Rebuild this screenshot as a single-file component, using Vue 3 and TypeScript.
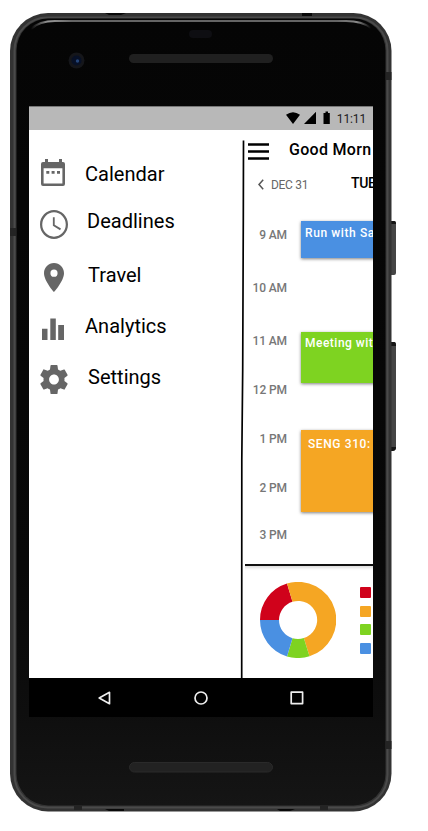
<script setup lang="ts">
interface MenuItem { id: string; label: string; paths: string[]; viewBox: string }
interface Slot { id: string; label: string }
interface CalendarEvent { id: string; title: string }

const menu: MenuItem[] = [
  { id: 'calendar', label: 'Calendar', viewBox: '0 0 24 27', paths: ['M4 0h3v3h11V0h3v3h1q2 0 2 2v20q0 2-2 2H2q-2 0-2-2V5q0-2 2-2h2zM2.6 9.2v15.2h18.8V9.2zM5.3 12h3v2.8h-3zm5.3 0h3v2.8h-3zm5.4 0h3v2.8h-3z'] },
  { id: 'deadlines', label: 'Deadlines', viewBox: '2 2 20 20', paths: ['M11.99 2C6.47 2 2 6.48 2 12s4.47 10 9.99 10C17.52 22 22 17.52 22 12S17.52 2 11.99 2zM12 20.4a8.4 8.4 0 1 1 0-16.8 8.4 8.4 0 0 1 0 16.8zM12.5 7H11.2v5.8l5.1 3.1.7-1.1-4.5-2.7z'] },
  { id: 'travel', label: 'Travel', viewBox: '5 2 14 20', paths: ['M12 2C8.13 2 5 5.13 5 9c0 5.25 7 13 7 13s7-7.75 7-13c0-3.87-3.13-7-7-7zm0 9.5a2.5 2.5 0 0 1 0-5 2.5 2.5 0 0 1 0 5z'] },
  { id: 'analytics', label: 'Analytics', viewBox: '0 0 22 22', paths: ['M0 10.8h5.5V22H0zM8.3.5h5.5V22H8.3zM16.2 7H22v15h-5.8z'] },
  { id: 'settings', label: 'Settings', viewBox: '2 2 20 20', paths: ['M19.43 12.98c.04-.32.07-.64.07-.98s-.03-.66-.07-.98l2.11-1.65c.19-.15.24-.42.12-.64l-2-3.46c-.12-.22-.39-.3-.61-.22l-2.49 1c-.52-.4-1.08-.73-1.69-.98l-.38-2.65C14.46 2.18 14.25 2 14 2h-4c-.25 0-.46.18-.49.42l-.38 2.65c-.61.25-1.17.59-1.69.98l-2.49-1c-.23-.09-.49 0-.61.22l-2 3.46c-.13.22-.07.49.12.64l2.11 1.65c-.04.32-.07.65-.07.98s.03.66.07.98l-2.11 1.65c-.19.15-.24.42-.12.64l2 3.46c.12.22.39.3.61.22l2.49-1c.52.4 1.08.73 1.69.98l.38 2.65c.03.24.24.42.49.42h4c.25 0 .46-.18.49-.42l.38-2.65c.61-.25 1.17-.59 1.69-.98l2.49 1c.23.09.49 0 .61-.22l2-3.46c.12-.22.07-.49-.12-.64l-2.11-1.65zM12 15.5c-1.93 0-3.5-1.57-3.5-3.5s1.57-3.5 3.5-3.5 3.5 1.57 3.5 3.5-1.57 3.5-3.5 3.5z'] },
]

const slots: Slot[] = [
  { id: 'h9', label: '9 AM' },
  { id: 'h10', label: '10 AM' },
  { id: 'h11', label: '11 AM' },
  { id: 'h12', label: '12 PM' },
  { id: 'h13', label: '1 PM' },
  { id: 'h14', label: '2 PM' },
  { id: 'h15', label: '3 PM' },
]

const events: CalendarEvent[] = [
  { id: 'run', title: 'Run with Sa' },
  { id: 'meeting', title: 'Meeting wit' },
  { id: 'class', title: 'SENG 310:' },
]

const legend: string[] = ['red', 'orange', 'green', 'blue']
</script>

<template>
  <div class="phone">
    <svg class="shell" width="388" height="800" viewBox="10 13 388 800" aria-hidden="true">
      <defs>
        <linearGradient id="face" x1="0" y1="0" x2="0" y2="1">
          <stop offset="0" stop-color="#050505" />
          <stop offset=".7" stop-color="#080808" />
          <stop offset=".88" stop-color="#0e0e0e" />
          <stop offset="1" stop-color="#151515" />
        </linearGradient>
        <linearGradient id="glint" x1="0" y1="0" x2="1" y2="0">
          <stop offset="0" stop-color="#999" stop-opacity="0" />
          <stop offset=".05" stop-color="#999" />
          <stop offset=".12" stop-color="#656565" />
          <stop offset=".9" stop-color="#656565" />
          <stop offset=".96" stop-color="#888" />
          <stop offset="1" stop-color="#888" stop-opacity="0" />
        </linearGradient>
      </defs>
      <path d="M390 221h4q2 0 2 2v50q0 2-2 2h-4zM390 342h4q2 0 2 2v104q0 2-2 2h-4z" fill="#454545" />
      <path d="M391 221h3q2 0 2 3h-5zM391 342h3q2 0 2 4h-5zM391 447h5q0 4-3 4h-2z" fill="#151515" />
      <rect x="10" y="13" width="381.5" height="798.5" rx="38" fill="#333" />
      <rect x="14.5" y="17.5" width="373" height="790" rx="33" fill="none" stroke="#4a4a4a" stroke-width="2" />
      <rect x="16.5" y="18.5" width="369" height="787" rx="32" fill="url(#face)" />
      <path d="M31 29Q39 21 55 21H346Q362 21 371 28" fill="none" stroke="url(#glint)" stroke-width="2" />
      <path d="M105 13h21l-5 2h-12zM302 13h10v3h-10zM105 809h19v2h-15zM277 809h18l-5 2h-10z" fill="#090909" />
      <path d="M10 228h6v8h-6zM386 72h5.500v8h-5.500zM386 741h5.500v8h-5.500zM74 806h8v4h-8zM320 806h8v4h-8z" fill="#242424" />
      <rect x="189" y="30" width="23" height="8" rx="4" fill="#0e0e12" />
      <circle cx="76.500" cy="60.500" r="8" fill="#15161a" />
      <circle cx="76.500" cy="60.500" r="5" fill="#071026" />
      <circle cx="77.500" cy="61" r="1.700" fill="#254579" />
      <rect x="129" y="54" width="144" height="9" rx="4.500" fill="#202020" />
      <rect x="129.500" y="762.500" width="143" height="9.500" rx="4.750" fill="#222" stroke="#2a2a2a" />
    </svg>

    <div class="screen">
      <header class="status">
        <svg width="44" height="14" viewBox="0 0 44 14" aria-hidden="true">
          <path d="M0 3.800Q7-1.200 14 3.800L7 13zM30 .8V13H18zM37.500 2h2V.5h2.500V2h1.800v11h-6.300z" />
        </svg>
        <span class="clock">11:11</span>
      </header>

      <main class="main">
        <nav class="drawer">
          <a v-for="item in menu" :key="item.id" class="item" :class="item.id">
            <span class="icon">
              <svg :viewBox="item.viewBox" preserveAspectRatio="none" fill-rule="evenodd" aria-hidden="true">
                <path v-for="d in item.paths" :key="d" :d="d" />
              </svg>
            </span>
            <span class="label">{{ item.label }}</span>
          </a>
        </nav>

        <svg class="edge" width="5" height="548" viewBox="0 0 5 548" aria-hidden="true">
          <path d="M3.500 10.500 3.300 90 2.700 240 1.800 330 1.700 548" />
        </svg>

        <section class="day">
          <header class="top">
            <svg width="21" height="18" viewBox="0 0 21 18" aria-hidden="true">
              <path d="M0 1.500h21M0 8.500h21M0 15.500h21" stroke="#000" stroke-width="2.500" />
            </svg>
            <h1>Good Morn</h1>
          </header>
          <div class="dates">
            <svg width="6" height="11" viewBox="0 0 6 11" aria-hidden="true">
              <path d="M5.200.7 1 5.500l4.200 4.800" fill="none" stroke="#555" stroke-width="1.500" />
            </svg>
            <span class="prev">DEC 31</span>
            <strong>TUE</strong>
          </div>
          <div class="schedule">
            <div class="hours">
              <span v-for="slot in slots" :key="slot.id" :class="slot.id">{{ slot.label }}</span>
            </div>
            <div class="events">
              <article v-for="event in events" :key="event.id" :class="event.id">{{ event.title }}</article>
            </div>
          </div>
          <footer class="summary">
            <svg class="donut" width="76" height="76" viewBox="-38 -38 76 76" aria-hidden="true">
              <path fill="#d0021b" d="M-38 0A38 38 0 0 1-11-36.400L-5.500-18.200A19 19 0 0 0-19 0z" />
              <path fill="#f5a623" d="M-11-36.400A38 38 0 1 1 11.500 36.200L5.800 18.100A19 19 0 1 0-5.500-18.200z" />
              <path fill="#7ed321" d="M11.500 36.200A38 38 0 0 1-11 36.400L-5.500 18.200A19 19 0 0 0 5.800 18.100z" />
              <path fill="#4a90e2" d="M-11 36.400A38 38 0 0 1-38 0H-19A19 19 0 0 0-5.500 18.200z" />
            </svg>
            <div class="legend">
              <i v-for="tone in legend" :key="tone" :class="tone"></i>
            </div>
          </footer>
        </section>
      </main>

      <nav class="softkeys">
        <svg width="14" height="14" viewBox="0 0 14 14" aria-hidden="true"><path d="M11.500 1.300v11.400L1.200 7z" /></svg>
        <svg width="14" height="14" viewBox="0 0 14 14" aria-hidden="true"><circle cx="7" cy="7" r="6" /></svg>
        <svg width="14" height="14" viewBox="0 0 14 14" aria-hidden="true"><path d="M1.200 1.200h11.400v11.400H1.200z" /></svg>
      </nav>
    </div>
  </div>
</template>

<style>
html, body { margin: 0; background: #fff; overflow: hidden; }
</style>

<style scoped>
.phone {
  position: relative;
  box-sizing: border-box;
  width: 388px;
  height: 800px;
  margin: 13px 0 0 10px;
  padding: 93px 0 0 19px;
  font-family: Roboto, "Liberation Sans", sans-serif;
  color: #000;
}
.phone svg { display: block; flex: none; }
.shell { position: absolute; top: 0; left: 0; }
.screen { position: relative; width: 344px; height: 611px; overflow: hidden; background: #fff; display: flex; flex-direction: column; }
.status { flex: none; box-sizing: border-box; height: 24px; background: #b8b8b8; border-top: 1px solid #777; display: flex; justify-content: flex-end; align-items: center; padding-right: 7px; gap: 7px; }
.status svg { margin-top: -1px; }
.clock { font-size: 12px; line-height: 14px; letter-spacing: -.15px; color: #1c1c1c; }
.main { flex: none; height: 548px; display: flex; overflow: hidden; }

.drawer { width: 211px; flex: none; box-sizing: border-box; padding: 18px 0 0 11px; }
.item { display: flex; align-items: flex-start; height: 51px; font-size: 20px; line-height: 24px; letter-spacing: .02px; }
.icon { width: 28px; height: 30px; flex: none; display: flex; align-items: center; justify-content: center; }
.icon svg { width: 28px; height: 29px; fill: #666; }
.label { margin-left: 19px; }
.calendar .icon { width: 26px; height: 50px; align-items: flex-start; padding-top: 11px; box-sizing: border-box; }
.calendar .icon svg { width: 24px; height: 27px; }
.calendar .label { padding-top: 14px; }
.deadlines .icon { padding-top: 10px; }
.deadlines .label { padding-top: 10px; }
.travel .icon { padding-top: 12px; }
.travel .icon svg { width: 20px; }
.travel .label { padding-top: 13px; margin-left: 20px; }
.analytics .icon { width: 26px; padding-top: 13px; }
.analytics .icon svg { width: 22px; height: 22px; }
.analytics .label { padding-top: 13px; }
.settings .icon { padding-top: 12px; }
.settings .label { padding-top: 13px; margin-left: 20px; }

.edge { fill: none; stroke: #000; stroke-width: 1.7; }
.day { flex: none; width: 128px; overflow: hidden; display: flex; flex-direction: column; white-space: nowrap; }
.top { height: 40px; display: flex; padding: 13px 0 0 3px; box-sizing: border-box; }
h1 { margin: -3px 0 0 20px; font-size: 16px; line-height: 20px; font-weight: 500; letter-spacing: .3px; }
.dates { height: 34px; display: flex; align-items: flex-start; padding: 9px 0 0 13px; box-sizing: border-box; font-size: 12px; line-height: 14px; color: #666; }
.prev { flex: none; width: 80px; margin-left: 7px; margin-top: -1px; letter-spacing: -.3px; }
.dates strong { margin-top: -4px; color: #000; font-size: 14px; line-height: 16px; font-weight: 500; letter-spacing: -.3px; }
.schedule { height: 360px; flex: none; display: flex; }
.hours { flex: none; width: 42px; display: flex; flex-direction: column; text-align: right; font-size: 12px; line-height: 14px; font-weight: 500; color: #777; letter-spacing: -.1px; }
.h9 { margin-top: 24px; }
.h10 { margin-top: 39px; }
.h11 { margin-top: 39px; }
.h12 { margin-top: 35px; }
.h13 { margin-top: 35px; }
.h14 { margin-top: 35px; }
.h15 { margin-top: 33px; }
.events { flex: none; width: 100px; margin-left: 14px; color: #fff; font-size: 12px; line-height: 14px; font-weight: 500; letter-spacing: .6px; }
.events article { box-sizing: border-box; padding: 5px 0 0 4px; box-shadow: 0 1px 3px rgba(0, 0, 0, .5); }
.events .run { height: 37px; margin-top: 16.5px; background: #4a90e2; }
.events .meeting { height: 51px; margin-top: 74px; padding-top: 4px; background: #7ed321; letter-spacing: .5px; }
.events .class { height: 82px; margin-top: 47px; padding: 7px 0 0 7px; background: #f5a623; }

.summary { box-sizing: border-box; height: 114px; border-top: 2px solid #111; box-shadow: inset 0 4px 3px -2px #ddd; display: flex; padding: 16px 0 0 15px; }
.legend { display: flex; flex-direction: column; gap: 8px; margin: 5px 0 0 24px; }
.legend i { width: 11px; height: 11px; border-radius: 1px; margin-bottom: -.3px; }
.red { background: #d0021b; }
.orange { background: #f5a623; }
.green { background: #7ed321; }
.blue { background: #4a90e2; }
.softkeys { flex: 1; background: #000; display: flex; align-items: center; padding-left: 69px; gap: 82px; fill: none; stroke: #eee; stroke-width: 1.7; stroke-linejoin: round; }
</style>
